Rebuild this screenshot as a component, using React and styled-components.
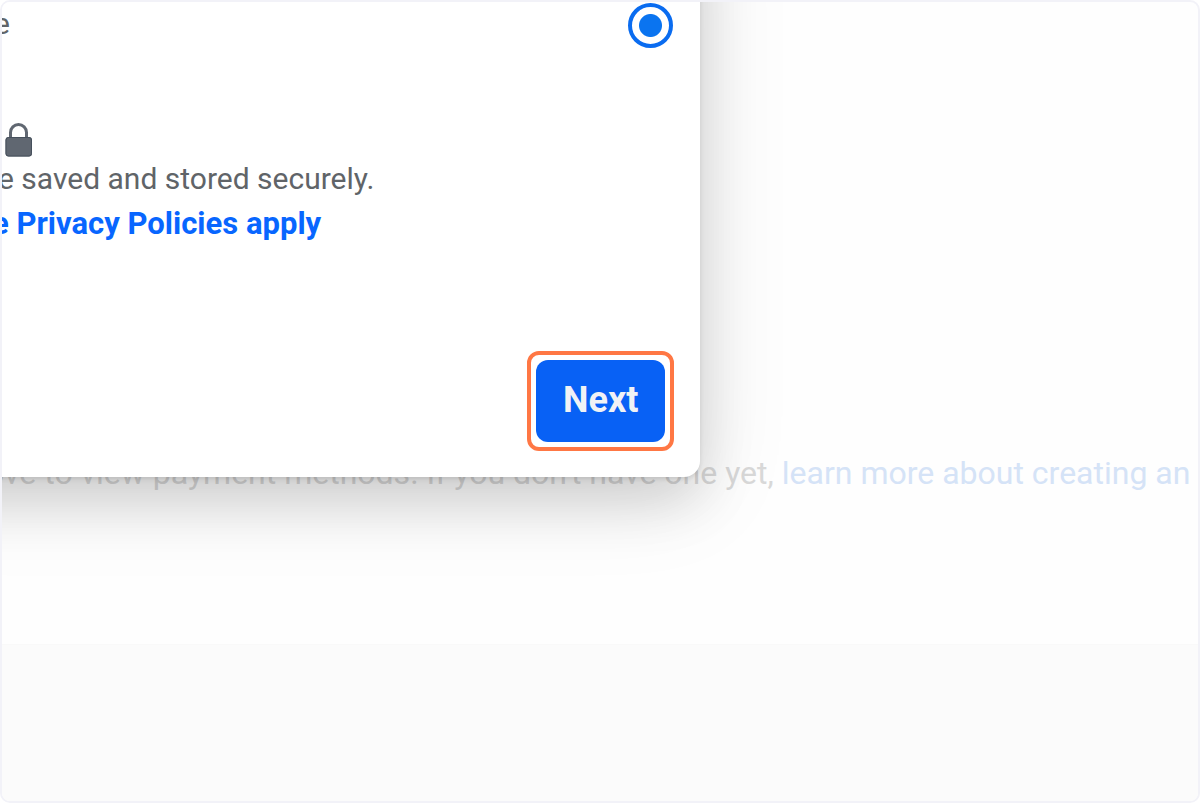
import React from 'react';
import styled, { createGlobalStyle } from 'styled-components';

const GlobalStyle = createGlobalStyle`
  *, *::before, *::after { box-sizing: border-box; }
  body { margin: 0; background: #fff; font-family: Roboto, "Liberation Sans", sans-serif; }
`;

const Frame = styled.div`
  position: relative;
  display: flex;
  flex-direction: column;
  min-height: 100vh;
  border: 2px solid #f2f2f8;
  border-radius: 10px;
  overflow: hidden;
  background: #fefefe;
`;

const PageContent = styled.main`
  padding: 452px 0 152px;
`;

const Notice = styled.p`
  margin: 0;
  text-indent: ${(p) => p.$indent}px;
  font-size: 32px;
  line-height: 38px;
  white-space: nowrap;
  color: #d9d9d9;
`;

const NoticeLink = styled.a`
  color: #d5e3f7;
  text-decoration: none;
`;

const PageFooter = styled.footer`
  flex: 1;
  border-top: 1px solid #f9f9f9;
  background: #fbfbfb;
`;

const Dialog = styled.section`
  position: absolute;
  top: -100px;
  left: -100px;
  width: calc(58.4% + 100px);
  padding: 100px 0 0 100px;
  border-radius: 16px;
  background: #fff;
  box-shadow: 0 2px 4px rgba(0, 0, 0, 0.1), 0 24px 56px rgba(0, 0, 0, 0.14), 0 16px 96px rgba(0, 0, 0, 0.1);
`;

const OptionRow = styled.label`
  display: flex;
  justify-content: space-between;
  height: 46px;
  padding-right: 27px;
`;

const Line = styled.span`
  display: block;
  text-indent: ${(p) => p.$indent}px;
  font-size: 30px;
  line-height: 44px;
  white-space: nowrap;
  color: #606468;
`;

const Radio = styled.input`
  appearance: none;
  width: 45px;
  height: 45px;
  margin: 1px 0 0;
  border: 4px solid #0a6cf0;
  border-radius: 50%;
  background: radial-gradient(circle, #0a74f0 11px, #fff 12px);
`;

const Security = styled.div`
  padding-top: 75px;
`;

const LockIcon = styled.svg`
  display: block;
  width: 28px;
  height: 34px;
  margin-left: 3px;
`;

const PolicyLink = styled.a`
  display: block;
  text-indent: ${(p) => p.$indent}px;
  font-size: 31px;
  font-weight: 700;
  line-height: 46px;
  white-space: nowrap;
  color: #0866ff;
  text-decoration: none;
`;

const Actions = styled.div`
  display: flex;
  justify-content: flex-end;
  padding: 104px 26px 26px;
`;

const Highlight = styled.div`
  padding: 5px;
  border: 4px solid #ff7744;
  border-radius: 12px;
`;

const NextButton = styled.button`
  display: block;
  height: 82px;
  padding: 0 27px 2px;
  border: 0;
  border-radius: 12px;
  background: #0861f5;
  color: #f0f2f5;
  font: 700 36px/40px Roboto, "Liberation Sans", sans-serif;
`;

export default function App() {
  return (
    <>
      <GlobalStyle />
      <Frame>
        <PageContent>
          <Notice $indent={-16}>
            ove to view payment methods. If you don't have one yet,{' '}
            <NoticeLink href="#account">learn more about creating an a</NoticeLink>
          </Notice>
        </PageContent>
        <PageFooter />
        <Dialog role="dialog" aria-label="Payment method">
          <OptionRow>
            <Line $indent={-8}>e</Line>
            <Radio type="radio" name="method" defaultChecked />
          </OptionRow>
          <Security>
            <LockIcon viewBox="0 0 28 34" aria-hidden="true">
              <path d="M5.5 15V9.5a8 8 0 0 1 16 0V15" fill="none" stroke="#606771" strokeWidth="3" />
              <rect x="0.5" y="14" width="26.5" height="19.5" rx="3" fill="#606771" />
              <rect x="1" y="14.5" width="25.5" height="18.5" rx="2.5" fill="none" stroke="#46505c" strokeWidth="1" />
            </LockIcon>
            <Line $indent={-4}>e saved and stored securely.</Line>
            <PolicyLink href="#privacy" $indent={-10}>e Privacy Policies apply</PolicyLink>
          </Security>
          <Actions>
            <Highlight>
              <NextButton type="button">Next</NextButton>
            </Highlight>
          </Actions>
        </Dialog>
      </Frame>
    </>
  );
}
